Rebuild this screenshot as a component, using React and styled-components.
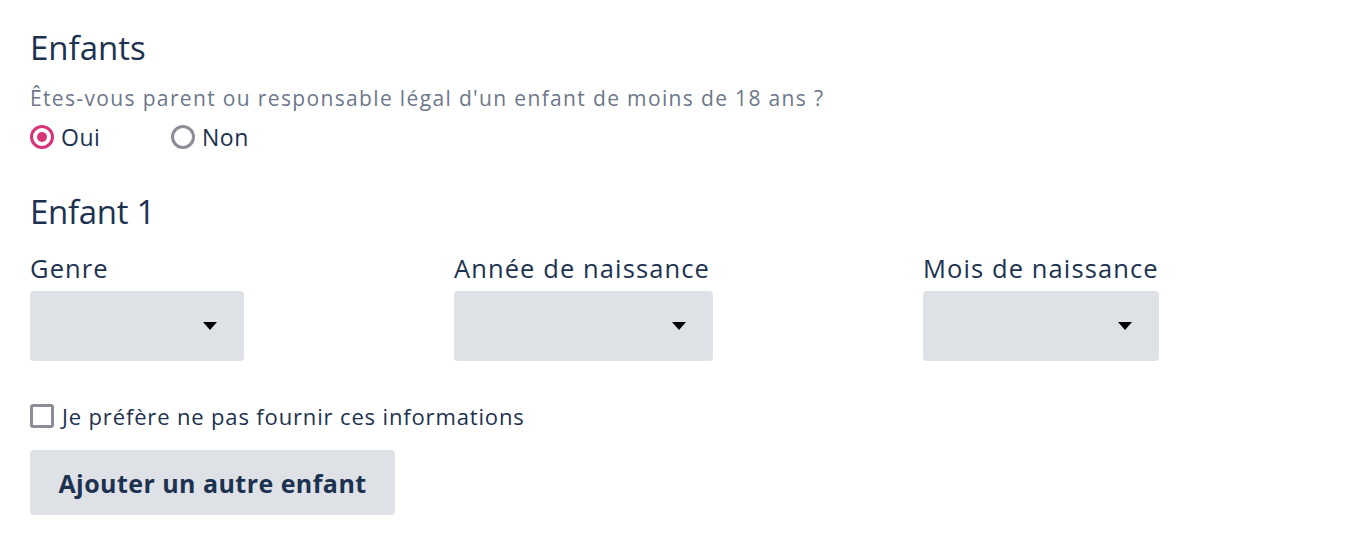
import React from "react";
import styled, { createGlobalStyle } from "styled-components";

const Global = createGlobalStyle`
  body { margin: 0; background: #fff; font-family: "Open Sans", Lato, sans-serif; color: #1c3250; }
`;

const Page = styled.div`
  padding: 26px 30px 0 30px;
  display: flex;
  flex-direction: column;
`;

const Heading = styled.h2`
  margin: 0;
  font-size: 33px;
  font-weight: 400;
  line-height: 44px;
  color: #1c3250;
`;

const Question = styled.p`
  margin: 16px 0 0 0;
  font-size: 21px;
  letter-spacing: 1.35px;
  line-height: 24px;
  color: #6c778a;
`;

const RadioRow = styled.div`
  display: flex;
  margin-top: 12px;
`;

const RadioLabel = styled.label`
  display: flex;
  align-items: center;
  gap: 7px;
  width: 141px;
  font-size: 23px;
  letter-spacing: 0.5px;
  line-height: 30px;
  color: #1c3250;
`;

const RadioDot = styled.span`
  box-sizing: border-box;
  width: 24px;
  height: 24px;
  border-radius: 50%;
  border: 3px solid ${p => (p.$checked ? "#d6337b" : "#8f8b97")};
  display: flex;
  align-items: center;
  justify-content: center;
  &::after {
    content: "";
    width: 10px;
    height: 10px;
    border-radius: 50%;
    background: ${p => (p.$checked ? "#d6337b" : "transparent")};
  }
`;

const SubHeading = styled(Heading)`
  margin-top: 38px;
  letter-spacing: -0.3px;
`;

const Fields = styled.div`
  display: flex;
  margin-top: 20px;
`;

const Field = styled.div`
  width: ${p => p.$col}px;
  display: flex;
  flex-direction: column;
  gap: 9px;
`;

const FieldLabel = styled.label`
  font-size: 25.5px;
  letter-spacing: 1.1px;
  line-height: 28px;
  color: #1c3250;
`;

const Select = styled.div`
  width: ${p => p.$w}px;
  height: 70px;
  background: #dee1e6;
  border-radius: 4px;
  display: flex;
  align-items: center;
  justify-content: flex-end;
  padding-right: 27px;
  box-sizing: border-box;
`;

const Caret = styled.span`
  width: 0;
  height: 0;
  border-left: 7px solid transparent;
  border-right: 7px solid transparent;
  border-top: 8px solid #000;
`;

const CheckRow = styled.label`
  display: flex;
  align-items: center;
  gap: 8px;
  margin-top: 42px;
  font-size: 22px;
  letter-spacing: 0.85px;
  line-height: 26px;
  color: #1c3250;
`;

const Box = styled.span`
  box-sizing: border-box;
  width: 24px;
  height: 24px;
  border: 3px solid #8f8b97;
  border-radius: 3px;
`;

const Button = styled.button`
  align-self: flex-start;
  margin-top: 21px;
  width: 365px;
  height: 65px;
  border: none;
  border-radius: 4px;
  background: #dee1e6;
  font-family: "Open Sans", Lato, sans-serif;
  font-weight: 700;
  font-size: 25px;
  letter-spacing: 0.45px;
  color: #1c3250;
`;

export default function App() {
  return (
    <>
      <Global />
      <Page>
        <Heading>Enfants</Heading>
        <Question>Êtes-vous parent ou responsable légal d'un enfant de moins de 18 ans ?</Question>
        <RadioRow>
          <RadioLabel><RadioDot $checked />Oui</RadioLabel>
          <RadioLabel><RadioDot />Non</RadioLabel>
        </RadioRow>
        <SubHeading>Enfant 1</SubHeading>
        <Fields>
          <Field $col={424}>
            <FieldLabel>Genre</FieldLabel>
            <Select $w={214}><Caret /></Select>
          </Field>
          <Field $col={469}>
            <FieldLabel>Année de naissance</FieldLabel>
            <Select $w={259}><Caret /></Select>
          </Field>
          <Field $col={300}>
            <FieldLabel>Mois de naissance</FieldLabel>
            <Select $w={236}><Caret /></Select>
          </Field>
        </Fields>
        <CheckRow><Box />Je préfère ne pas fournir ces informations</CheckRow>
        <Button>Ajouter un autre enfant</Button>
      </Page>
    </>
  );
}
